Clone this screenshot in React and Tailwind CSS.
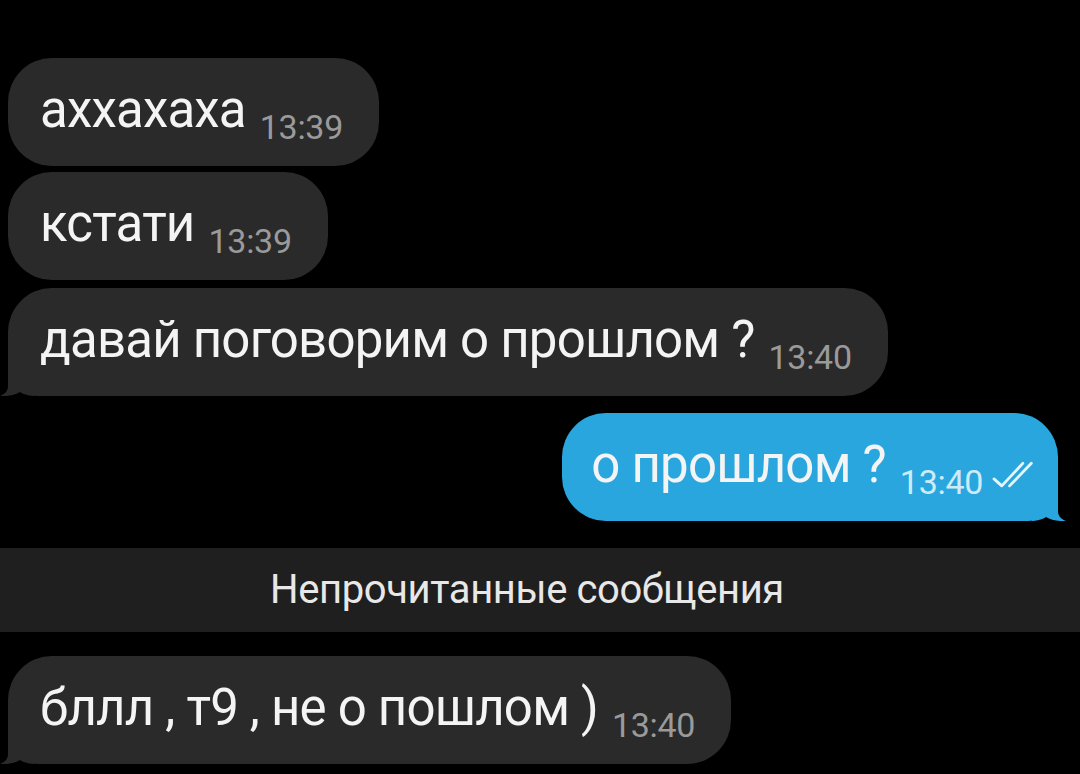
import React from 'react';

const messages = [
  { id: 1, text: 'аххахаха', time: '13:39', out: false, tail: false },
  { id: 2, text: 'кстати', time: '13:39', out: false, tail: false },
  { id: 3, text: 'давай поговорим о прошлом ?', time: '13:40', out: false, tail: true },
  { id: 4, text: 'о прошлом ?', time: '13:40', out: true, tail: true },
];

function Tail({ color, right }) {
  return (
    <svg
      width="40"
      height="40"
      viewBox="0 0 40 40"
      className={`absolute bottom-0 ${right ? 'right-[-8px] -scale-x-100' : 'left-[-8px]'}`}
    >
      <path
        d="M8 8 L8 30 C8 35 5 38 0 40 C8 40.5 15 39 20 36 C23 38 27 39.6 34 40 L34 8 Z"
        fill={color}
      />
    </svg>
  );
}

function DoubleCheck() {
  return (
    <svg width="48" height="28" viewBox="0 0 30 18" className="ml-[8px] inline-block align-[-7px]">
      <path d="M1.5 11.5 L6.5 16 L20 1.5" fill="none" stroke="#e6f6fd" strokeWidth="1.8" strokeLinecap="round" strokeLinejoin="round" />
      <path d="M11.5 16 L25.5 1.5" fill="none" stroke="#e6f6fd" strokeWidth="1.8" strokeLinecap="round" />
    </svg>
  );
}

function Bubble({ msg }) {
  const bg = msg.out ? '#2aa6df' : '#2a2a2a';
  return (
    <div className={`flex ${msg.out ? 'justify-end pr-[22px]' : 'justify-start pl-[8px]'}`}>
      <div
        className={`relative h-[108px] flex items-center rounded-[44px] ${
          msg.out ? 'bg-[#2aa6df] pl-[29px] pr-[19px]' : 'bg-[#2a2a2a] pl-[32px] pr-[36px]'
        } ${msg.tail ? (msg.out ? 'rounded-br-[30px]' : 'rounded-bl-[30px]') : ''}`}
      >
        {msg.tail && <Tail color={bg} right={msg.out} />}
        <span className="relative top-[2px] whitespace-nowrap text-[51px] leading-none tracking-[-0.8px] text-[#f4f4f4]">
          {msg.text}
          <span
            className={`ml-[14px] text-[34px] tracking-[-0.3px] align-[-12px] ${msg.out ? 'text-[#cdebf8]' : 'text-[#9a9a9a]'}`}
          >
            {msg.time}
          </span>
          {msg.out && <DoubleCheck />}
        </span>
      </div>
    </div>
  );
}

export default function App() {
  return (
    <main className="min-h-screen w-[1080px] h-[774px] overflow-hidden bg-black pt-[58px] font-['Roboto',sans-serif]">
      <div className="flex flex-col">
        <Bubble msg={messages[0]} />
        <div className="mt-[6px]">
          <Bubble msg={messages[1]} />
        </div>
        <div className="mt-[8px]">
          <Bubble msg={messages[2]} />
        </div>
        <div className="mt-[17px]">
          <Bubble msg={messages[3]} />
        </div>
        <div className="mt-[27px] h-[84px] bg-[#1f1f1f] flex items-center justify-center pr-[26px]">
          <span className="text-[40px] text-[#e8e8e8] tracking-[-0.4px]">Непрочитанные сообщения</span>
        </div>
        <div className="mt-[24px]">
          <Bubble msg={{ text: 'бллл , т9 , не о пошлом )', time: '13:40', out: false, tail: true }} />
        </div>
      </div>
    </main>
  );
}
